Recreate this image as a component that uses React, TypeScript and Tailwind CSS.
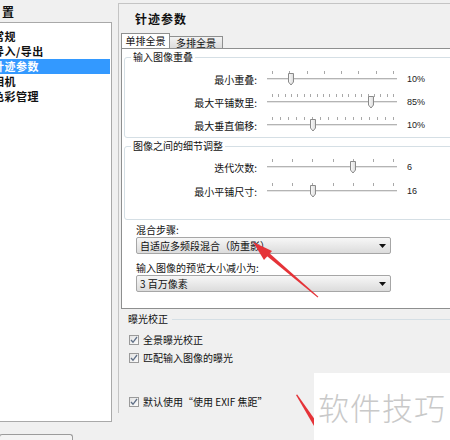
import React from "react";

const cjk = "font-['Noto_Sans_CJK_SC','Liberation_Sans',sans-serif]";

type SliderRow = { label: string; value: string; ticks: number; thumb: number };

const overlapRows: SliderRow[] = [
  { label: "最小重叠:", value: "10%", ticks: 8, thumb: 23 },
  { label: "最大平铺数里:", value: "85%", ticks: 20, thumb: 103 },
  { label: "最大垂直偏移:", value: "10%", ticks: 16, thumb: 45 },
];

const detailRows: SliderRow[] = [
  { label: "迭代次数:", value: "6", ticks: 7, thumb: 85 },
  { label: "最小平铺尺寸:", value: "16", ticks: 7, thumb: 45 },
];

const navItems = ["常规", "导入/导出", "针迹参数", "相机", "色彩管理"];

const Slider = ({ ticks, thumb }: { ticks: number; thumb: number }) => {
  const step = 121 / (ticks - 1);
  return (
    <div className="relative w-[130px] h-[23px] shrink-0">
      {Array.from({ length: ticks }).map((_, i) => (
        <div
          key={i}
          className="absolute top-[3px] w-px h-[3px] bg-[#a8a8a8]"
          style={{ left: 5 + i * step }}
        />
      ))}
      <div className="absolute top-[10px] left-0 right-0 h-[3px] border-t border-[#b4b4b4] border-b border-b-white bg-[#e6e6e6]" />
      <svg
        className="absolute top-[5px]"
        style={{ left: thumb - 3 }}
        width="8"
        height="13"
        viewBox="0 0 8 13"
      >
        <defs>
          <linearGradient id="thumbg" x1="0" y1="0" x2="1" y2="0">
            <stop offset="0" stopColor="#fbfbfb" />
            <stop offset="1" stopColor="#dcdcdc" />
          </linearGradient>
        </defs>
        <path
          d="M1.5 0.5 H6.5 V9 L4 12 L1.5 9 Z"
          fill="url(#thumbg)"
          stroke="#8a8a8a"
          strokeWidth="1"
        />
      </svg>
    </div>
  );
};

const SliderLine = ({ row }: { row: SliderRow }) => (
  <div className="flex items-center h-[23px]">
    <div className="w-[133px] text-right text-[10px] leading-[12px] text-[#111] pr-px">
      {row.label}
    </div>
    <div className="w-[9px]" />
    <Slider ticks={row.ticks} thumb={row.thumb} />
    <div className="ml-[10px] text-[9px] font-['Liberation_Sans',sans-serif] text-[#222]">
      {row.value}
    </div>
  </div>
);

const Check = ({ label }: { label: string }) => (
  <div className="flex items-center h-[18px]">
    <div className="w-[10px] h-[10px] border border-[#9a9a9a] bg-gradient-to-br from-[#e4e4e4] to-[#fbfbfb] flex items-center justify-center">
      <svg width="8" height="8" viewBox="0 0 8 8">
        <path d="M1 4 L3 6.3 L7 1" fill="none" stroke="#5f6f86" strokeWidth="1.3" />
      </svg>
    </div>
    <span className="ml-[4px] text-[10px] leading-[12px] text-[#111]">{label}</span>
  </div>
);

const Dropdown = ({ text }: { text: string }) => (
  <div className="w-[255px] h-[17px] border border-[#a6a6a6] rounded-[2px] bg-gradient-to-b from-[#f7f7f7] to-[#dcdcdc] flex items-center justify-between pl-[3px] pr-[4px]">
    <span className="text-[10px] leading-[12px] text-[#111]">{text}</span>
    <svg width="7" height="4" viewBox="0 0 7 4">
      <path d="M0 0 H7 L3.5 4 Z" fill="#111" />
    </svg>
  </div>
);

export default function App() {
  return (
    <div
      className={`relative w-[450px] h-[440px] overflow-hidden bg-[#f0f0f0] flex ${cjk}`}
    >
      {/* left navigation */}
      <div className="w-[118px] shrink-0 flex flex-col">
        <div className="h-[22px] pl-[2px] pt-[5px] text-[12px] leading-[14px] font-bold text-[#111]">
          置
        </div>
        <div className="-ml-px w-[113px] h-[400px] bg-white border border-[#a9a9a9] pt-[6px]">
          {navItems.map((item) => (
            <div
              key={item}
              className={`h-[15px] w-[110px] flex items-center overflow-hidden ${
                item === "针迹参数" ? "bg-[#3399ff] text-white" : "text-[#111]"
              }`}
            >
              <span className="-ml-[7px] whitespace-nowrap text-[11px] leading-[13px] font-bold tracking-[0.5px]">
                {item}
              </span>
            </div>
          ))}
        </div>
        <div className="mt-auto -ml-px w-[74px] h-[6px] border border-b-0 border-[#9c9c9c] rounded-t-[3px] bg-[#f4f4f4]" />
      </div>

      {/* right settings */}
      <div className="flex-1 pt-[3px]">
        <div className="w-[360px] h-[410px] border-t border-l border-[#c4c4c4] flex flex-col">
          <div className="h-[30px] pl-[16px] flex items-center text-[12px] font-bold text-[#111] tracking-[1px]">
            针迹参数
          </div>
          <div className="h-[14px] pl-[2px] flex items-end relative z-10">
            <div className="h-[15px] w-[49px] bg-white border border-b-0 border-[#8e8f8f] flex items-center justify-center text-[10px] leading-[12px] text-[#111]">
              单排全景
            </div>
            <div className="h-[12px] w-[54px] -ml-px border border-b-0 border-[#8e8f8f] bg-gradient-to-b from-[#f2f2f2] to-[#dcdcdc] flex items-center justify-center text-[10px] leading-[12px] text-[#111]">
              多排全景
            </div>
          </div>
          <div className="ml-[2px] h-[261px] bg-white border border-[#8e8f8f] pl-[2px] pt-[8px]">
            <div className="relative h-[81px] border border-[#d5dfe5] rounded-[3px] pt-[10px]">
              <div className="absolute -top-[7px] left-[6px] px-[2px] bg-white text-[10px] leading-[12px] text-[#111]">
                输入图像重叠
              </div>
              {overlapRows.map((row) => (
                <SliderLine key={row.label} row={row} />
              ))}
            </div>
            <div className="relative mt-[8px] h-[74px] border border-[#d5dfe5] rounded-[3px] pt-[9px]">
              <div className="absolute -top-[7px] left-[6px] px-[2px] bg-white text-[10px] leading-[12px] text-[#111]">
                图像之间的细节调整
              </div>
              <div className="flex flex-col gap-[1px]">
                {detailRows.map((row) => (
                  <SliderLine key={row.label} row={row} />
                ))}
              </div>
            </div>
            <div className="ml-[12px] mt-[4px] flex flex-col">
              <div className="text-[10px] leading-[12px] text-[#111]">混合步骤:</div>
              <div className="mt-[1px]">
                <Dropdown text="自适应多频段混合（防重影）" />
              </div>
              <div className="mt-[8px] text-[10px] leading-[12px] text-[#111]">
                输入图像的预览大小减小为:
              </div>
              <div className="mt-[1px]">
                <Dropdown text="3 百万像素" />
              </div>
            </div>
          </div>
          <div className="relative mt-[4px] ml-[9px] flex items-center">
            <span className="text-[10px] leading-[12px] text-[#111] pr-[4px]">曝光校正</span>
            <div className="flex-1 h-px bg-[#d5dfe5]" />
          </div>
          <div className="ml-[10px] mt-[6px] flex flex-col">
            <Check label="全景曝光校正" />
            <Check label="匹配输入图像的曝光" />
            <div className="h-[26px]" />
            <Check label="默认使用“使用 EXIF 焦距”" />
          </div>
        </div>
      </div>

      {/* annotation arrows */}
      <svg className="absolute left-0 top-0 pointer-events-none" width="450" height="440">
        <polygon points="253,242 272,251 264,260" fill="#e53338" />
        <polygon points="265,254.5 267.5,251.5 318.4,296.7 317.6,297.4" fill="#e53338" />
        <polygon points="296,395 297.2,394.4 318,424 314,426" fill="#e53338" />
      </svg>

      {/* watermark */}
      <div className="absolute left-[314px] top-[373px] w-[136px] h-[67px] bg-white flex items-center justify-center">
        <span className="text-[31px] leading-[36px] font-light text-[#c9c9c9] tracking-[1px]">
          软件技巧
        </span>
      </div>
    </div>
  );
}
